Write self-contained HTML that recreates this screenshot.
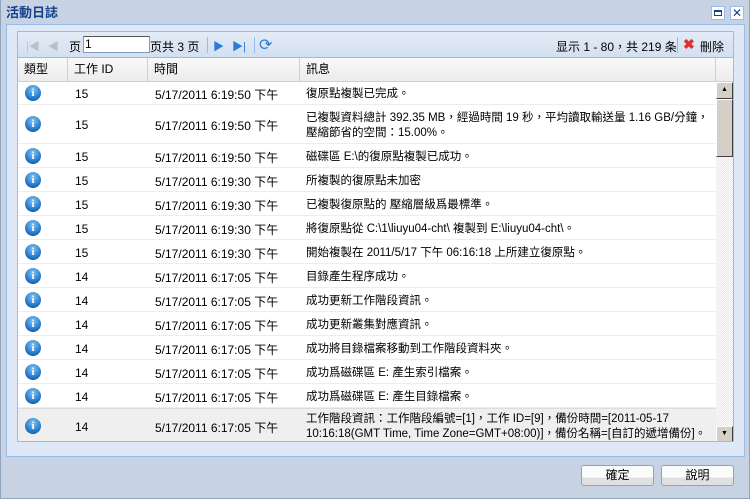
<!DOCTYPE html>
<html><head><meta charset="utf-8"><style>
*{margin:0;padding:0;box-sizing:border-box}
body{width:750px;height:499px;overflow:hidden;background:#c7d3e3;font-family:"Liberation Sans","Noto Sans CJK TC",sans-serif;font-size:12px;color:#000;position:relative}
.abs{position:absolute}
#win{left:0;top:0;width:750px;height:499px;border:1px solid #8ea3bd;border-top:none}
#title{left:6px;top:2px;font-weight:bold;font-size:13px;color:#15428b}
#panel{left:6px;top:24px;width:739px;height:433px;background:#dfe8f6;border:1px solid #99bbe8}
#grid{left:17px;top:31px;width:717px;height:411px;background:#fff;border:1px solid #99bbe8;overflow:hidden}
#tb{left:0;top:0;width:715px;height:26px;background:linear-gradient(#e3ebf6,#d3e0f1);border-bottom:1px solid #99bbe8}
#hdr{left:0;top:26px;width:715px;height:24px;background:linear-gradient(#f9f9f9,#ececec);border-bottom:1px solid #d0d0d0}
.hc{position:absolute;top:0;height:23px;line-height:23px;padding-left:6px;border-right:1px solid #d0d0d0}
.row{position:absolute;left:0;width:698px;border-bottom:1px solid #ededed}
.row div{position:absolute;white-space:nowrap}
.ic{left:7px;width:16px;height:16px;border-radius:50%;background:radial-gradient(circle at 50% 30%,#7fc6f5,#1a6fc0 70%,#0d4f96);color:#fff;font:bold 11px "Liberation Serif",serif;text-align:center;line-height:16px}
.id{left:57px}.tm{left:137px}.msg{left:288px;line-height:15px;font-size:11.5px;margin-top:2px}
#sb{left:698px;top:50px;width:17px;height:361px;background:repeating-conic-gradient(#e6e6e6 0 25%,#fff 0 50%) 0 0/2px 2px}
.btn{width:73px;height:21px;border:1px solid #a0a0a0;border-radius:3px;background:linear-gradient(#fbfbfb 60%,#e0e0e0 60%);text-align:center;line-height:19px;font-size:12px}
</style></head><body>
<div id="win" class="abs"></div>
<div id="title" class="abs">活動日誌</div>
<div class="abs" style="left:711px;top:6px;width:14px;height:14px;border:1px solid #99bbe8;background:#fff"><div class="abs" style="left:2px;top:3px;width:8px;height:6px;border:1px solid #15428b;border-top-width:2px"></div></div>
<div class="abs" style="left:730px;top:6px;width:14px;height:14px;border:1px solid #99bbe8;background:#fff;color:#15428b;font-size:12px;line-height:12px;text-align:center">✕</div>
<div id="panel" class="abs"></div>
<div id="grid" class="abs">
 <div id="tb" class="abs">
  <div class="abs" style="left:8px;top:6px;color:#b8c0c8;font-size:11px">|◀</div>
  <div class="abs" style="left:30px;top:6px;color:#b8c0c8;font-size:11px">◀</div>
  <div class="abs" style="left:51px;top:6px">页</div>
  <div class="abs" style="left:65px;top:4px;width:67px;height:17px;border:1px solid #7f9db9;border-top-color:#555;background:#fff;padding-left:1px;line-height:15px">1</div>
  <div class="abs" style="left:132px;top:6px">页共 3 页</div>
  <div class="abs" style="left:189px;top:5px;width:1px;height:16px;background:#99bbe8"></div>
  <div class="abs" style="left:195px;top:6px;color:#2a7ad8;font-size:11px">▶</div>
  <div class="abs" style="left:214px;top:6px;color:#2a7ad8;font-size:11px">▶|</div>
  <div class="abs" style="left:236px;top:5px;width:1px;height:16px;background:#99bbe8"></div>
  <div class="abs" style="left:241px;top:3px;color:#2a7ad8;font-size:16px">⟳</div>
  <div class="abs" style="left:538px;top:6px">显示 1 - 80，共 219 条</div>
  <div class="abs" style="left:659px;top:5px;width:1px;height:16px;background:#99bbe8"></div>
  <div class="abs" style="left:665px;top:4px;color:#e03030;font-weight:bold;font-size:14px">✖</div>
  <div class="abs" style="left:682px;top:6px">刪除</div>
 </div>
 <div id="hdr" class="abs">
  <div class="hc" style="left:0;width:50px">類型</div>
  <div class="hc" style="left:50px;width:80px">工作 ID</div>
  <div class="hc" style="left:130px;width:152px">時間</div>
  <div class="hc" style="left:282px;width:416px">訊息</div>
 </div>
 <div class="row" style="top:50px;height:23px"><div class="ic" style="top:3px">i</div><div class="id" style="top:5px">15</div><div class="tm" style="top:4px">5/17/2011 6:19:50 下午</div><div class="msg" style="top:3px">復原點複製已完成。</div></div>
 <div class="row" style="top:73px;height:39px"><div class="ic" style="top:11px">i</div><div class="id" style="top:13px">15</div><div class="tm" style="top:12px">5/17/2011 6:19:50 下午</div><div class="msg" style="top:4px">已複製資料總計 392.35 MB，經過時間 19 秒，平均讀取輸送量 1.16 GB/分鐘，<br>壓縮節省的空間：15.00%。</div></div>
 <div class="row" style="top:112px;height:24px"><div class="ic" style="top:4px">i</div><div class="id" style="top:6px">15</div><div class="tm" style="top:5px">5/17/2011 6:19:50 下午</div><div class="msg" style="top:4px">磁碟區 E:\的復原點複製已成功。</div></div>
 <div class="row" style="top:136px;height:24px"><div class="ic" style="top:4px">i</div><div class="id" style="top:6px">15</div><div class="tm" style="top:5px">5/17/2011 6:19:30 下午</div><div class="msg" style="top:4px">所複製的復原點未加密</div></div>
 <div class="row" style="top:160px;height:24px"><div class="ic" style="top:4px">i</div><div class="id" style="top:6px">15</div><div class="tm" style="top:5px">5/17/2011 6:19:30 下午</div><div class="msg" style="top:4px">已複製復原點的 壓縮層級爲最標準。</div></div>
 <div class="row" style="top:184px;height:24px"><div class="ic" style="top:4px">i</div><div class="id" style="top:6px">15</div><div class="tm" style="top:5px">5/17/2011 6:19:30 下午</div><div class="msg" style="top:4px">將復原點從 C:\1\liuyu04-cht\ 複製到 E:\liuyu04-cht\。</div></div>
 <div class="row" style="top:208px;height:24px"><div class="ic" style="top:4px">i</div><div class="id" style="top:6px">15</div><div class="tm" style="top:5px">5/17/2011 6:19:30 下午</div><div class="msg" style="top:4px">開始複製在 2011/5/17 下午 06:16:18 上所建立復原點。</div></div>
 <div class="row" style="top:232px;height:24px"><div class="ic" style="top:4px">i</div><div class="id" style="top:6px">14</div><div class="tm" style="top:5px">5/17/2011 6:17:05 下午</div><div class="msg" style="top:4px">目錄產生程序成功。</div></div>
 <div class="row" style="top:256px;height:24px"><div class="ic" style="top:4px">i</div><div class="id" style="top:6px">14</div><div class="tm" style="top:5px">5/17/2011 6:17:05 下午</div><div class="msg" style="top:4px">成功更新工作階段資訊。</div></div>
 <div class="row" style="top:280px;height:24px"><div class="ic" style="top:4px">i</div><div class="id" style="top:6px">14</div><div class="tm" style="top:5px">5/17/2011 6:17:05 下午</div><div class="msg" style="top:4px">成功更新叢集對應資訊。</div></div>
 <div class="row" style="top:304px;height:24px"><div class="ic" style="top:4px">i</div><div class="id" style="top:6px">14</div><div class="tm" style="top:5px">5/17/2011 6:17:05 下午</div><div class="msg" style="top:4px">成功將目錄檔案移動到工作階段資料夾。</div></div>
 <div class="row" style="top:328px;height:24px"><div class="ic" style="top:4px">i</div><div class="id" style="top:6px">14</div><div class="tm" style="top:5px">5/17/2011 6:17:05 下午</div><div class="msg" style="top:4px">成功爲磁碟區 E: 產生索引檔案。</div></div>
 <div class="row" style="top:352px;height:24px"><div class="ic" style="top:4px">i</div><div class="id" style="top:6px">14</div><div class="tm" style="top:5px">5/17/2011 6:17:05 下午</div><div class="msg" style="top:4px">成功爲磁碟區 E: 產生目錄檔案。</div></div>
 <div class="row" style="top:376px;height:35px;background:#efefef;border-top:1px solid #ddd"><div class="ic" style="top:9px">i</div><div class="id" style="top:11px">14</div><div class="tm" style="top:10px">5/17/2011 6:17:05 下午</div><div class="msg" style="top:1px">工作階段資訊：工作階段編號=[1]，工作 ID=[9]，備份時間=[2011-05-17<br>10:16:18(GMT Time, Time Zone=GMT+08:00)]，備份名稱=[自訂的遞增備份]。</div></div>
 <div id="sb" class="abs">
  <div class="abs" style="left:0;top:0;width:17px;height:17px;background:#d4d0c8;border:1px solid;border-color:#fff #404040 #404040 #fff;font-size:7px;text-align:center;line-height:14px">▲</div>
  <div class="abs" style="left:0;top:17px;width:17px;height:58px;background:#d4d0c8;border:1px solid;border-color:#fff #404040 #404040 #fff"></div>
  <div class="abs" style="left:0;top:344px;width:17px;height:17px;background:#d4d0c8;border:1px solid;border-color:#fff #404040 #404040 #fff;font-size:7px;text-align:center;line-height:14px">▼</div>
 </div>
</div>
<div class="abs btn" style="left:581px;top:465px">確定</div>
<div class="abs btn" style="left:661px;top:465px">說明</div>
</body></html>
